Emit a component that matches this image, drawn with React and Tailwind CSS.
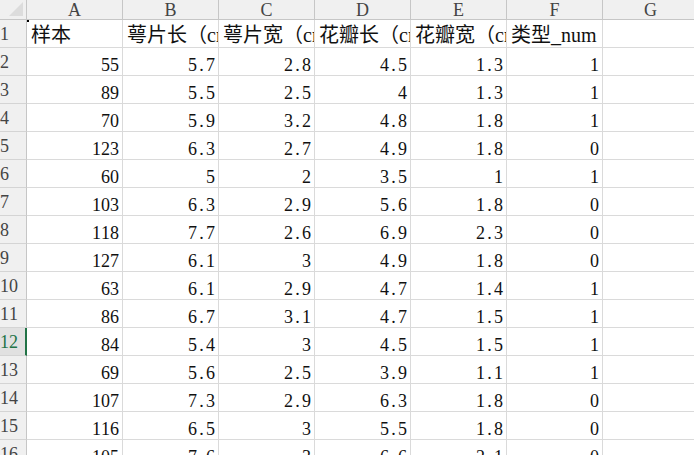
import React from "react";

const COLS = ["A", "B", "C", "D", "E", "F", "G"];

const HEAD = ["样本", "萼片长（cm）", "萼片宽（cm）", "花瓣长（cm）", "花瓣宽（cm）", "类型_num", ""];

const ROWS = [
  ["55", "5.7", "2.8", "4.5", "1.3", "1"],
  ["89", "5.5", "2.5", "4", "1.3", "1"],
  ["70", "5.9", "3.2", "4.8", "1.8", "1"],
  ["123", "6.3", "2.7", "4.9", "1.8", "0"],
  ["60", "5", "2", "3.5", "1", "1"],
  ["103", "6.3", "2.9", "5.6", "1.8", "0"],
  ["118", "7.7", "2.6", "6.9", "2.3", "0"],
  ["127", "6.1", "3", "4.9", "1.8", "0"],
  ["63", "6.1", "2.9", "4.7", "1.4", "1"],
  ["86", "6.7", "3.1", "4.7", "1.5", "1"],
  ["84", "5.4", "3", "4.5", "1.5", "1"],
  ["69", "5.6", "2.5", "3.9", "1.1", "1"],
  ["107", "7.3", "2.9", "6.3", "1.8", "0"],
  ["116", "6.5", "3", "5.5", "1.8", "0"],
  ["105", "7.6", "3", "6.6", "2.1", "0"],
];

const serif = { fontFamily: '"Liberation Serif", "Noto Sans CJK SC", serif' };

// SimSun-like half-width digits: every character takes 9px
const Num = ({ v }) => (
  <span className="flex">
    {v.split("").map((c, i) => (
      <span key={i} className="inline-block w-[9px] text-center">
        {c}
      </span>
    ))}
  </span>
);

const RowHead = ({ n, active }) => (
  <div
    className={`h-[28px] border-b border-[#d4d4d4] flex items-center overflow-hidden ${
      active
        ? "bg-[#e1e1e1] text-[#217346] border-r-2 border-r-[#217346]"
        : "bg-[#f0f0f0] text-[#444] border-r border-r-[#c6c6c6]"
    }`}
  >
    <span className="w-[18px] text-center leading-none">
      <Num v={String(n)} />
    </span>
  </div>
);

export default function App() {
  return (
    <div className="w-[694px] h-[455px] overflow-hidden bg-white text-[18px] text-[#111]" style={serif}>
      <div className="grid grid-cols-[27px_96px_96px_96px_96px_96px_96px_96px]">
        {/* corner */}
        <div className="h-[20px] bg-[#f0f0f0] border-r border-b border-[#c6c6c6] relative overflow-hidden">
          <div className="absolute right-[3px] bottom-[3px] w-0 h-0 border-l-[14px] border-l-transparent border-b-[14px] border-b-[#dcdcdc]" />
        </div>
        {COLS.map((c) => (
          <div
            key={c}
            className="h-[20px] bg-[#f0f0f0] border-r border-b border-[#c6c6c6] flex items-center justify-center text-[#444] leading-none"
          >
            {c}
          </div>
        ))}

        {/* row 1 */}
        <RowHead n={1} />
        {HEAD.map((h, i) => (
          <div
            key={i}
            className="relative h-[28px] border-r border-b border-[#dadada] flex items-end pl-[4px] pb-[2px] overflow-hidden whitespace-nowrap leading-none text-[20px]"
          >
            {i === 0 && <div className="absolute left-0 top-0 w-[2px] h-[2px] bg-black" />}
            {h}
          </div>
        ))}

        {ROWS.map((r, ri) => (
          <React.Fragment key={ri}>
            <RowHead n={ri + 2} active={ri + 2 === 12} />
            {r.map((v, ci) => (
              <div
                key={ci}
                className="h-[28px] border-r border-b border-[#dadada] flex items-end justify-end pr-[3px] pb-[1px] leading-none"
              >
                <Num v={v} />
              </div>
            ))}
            <div className="h-[28px] border-r border-b border-[#dadada]" />
          </React.Fragment>
        ))}
      </div>
    </div>
  );
}
